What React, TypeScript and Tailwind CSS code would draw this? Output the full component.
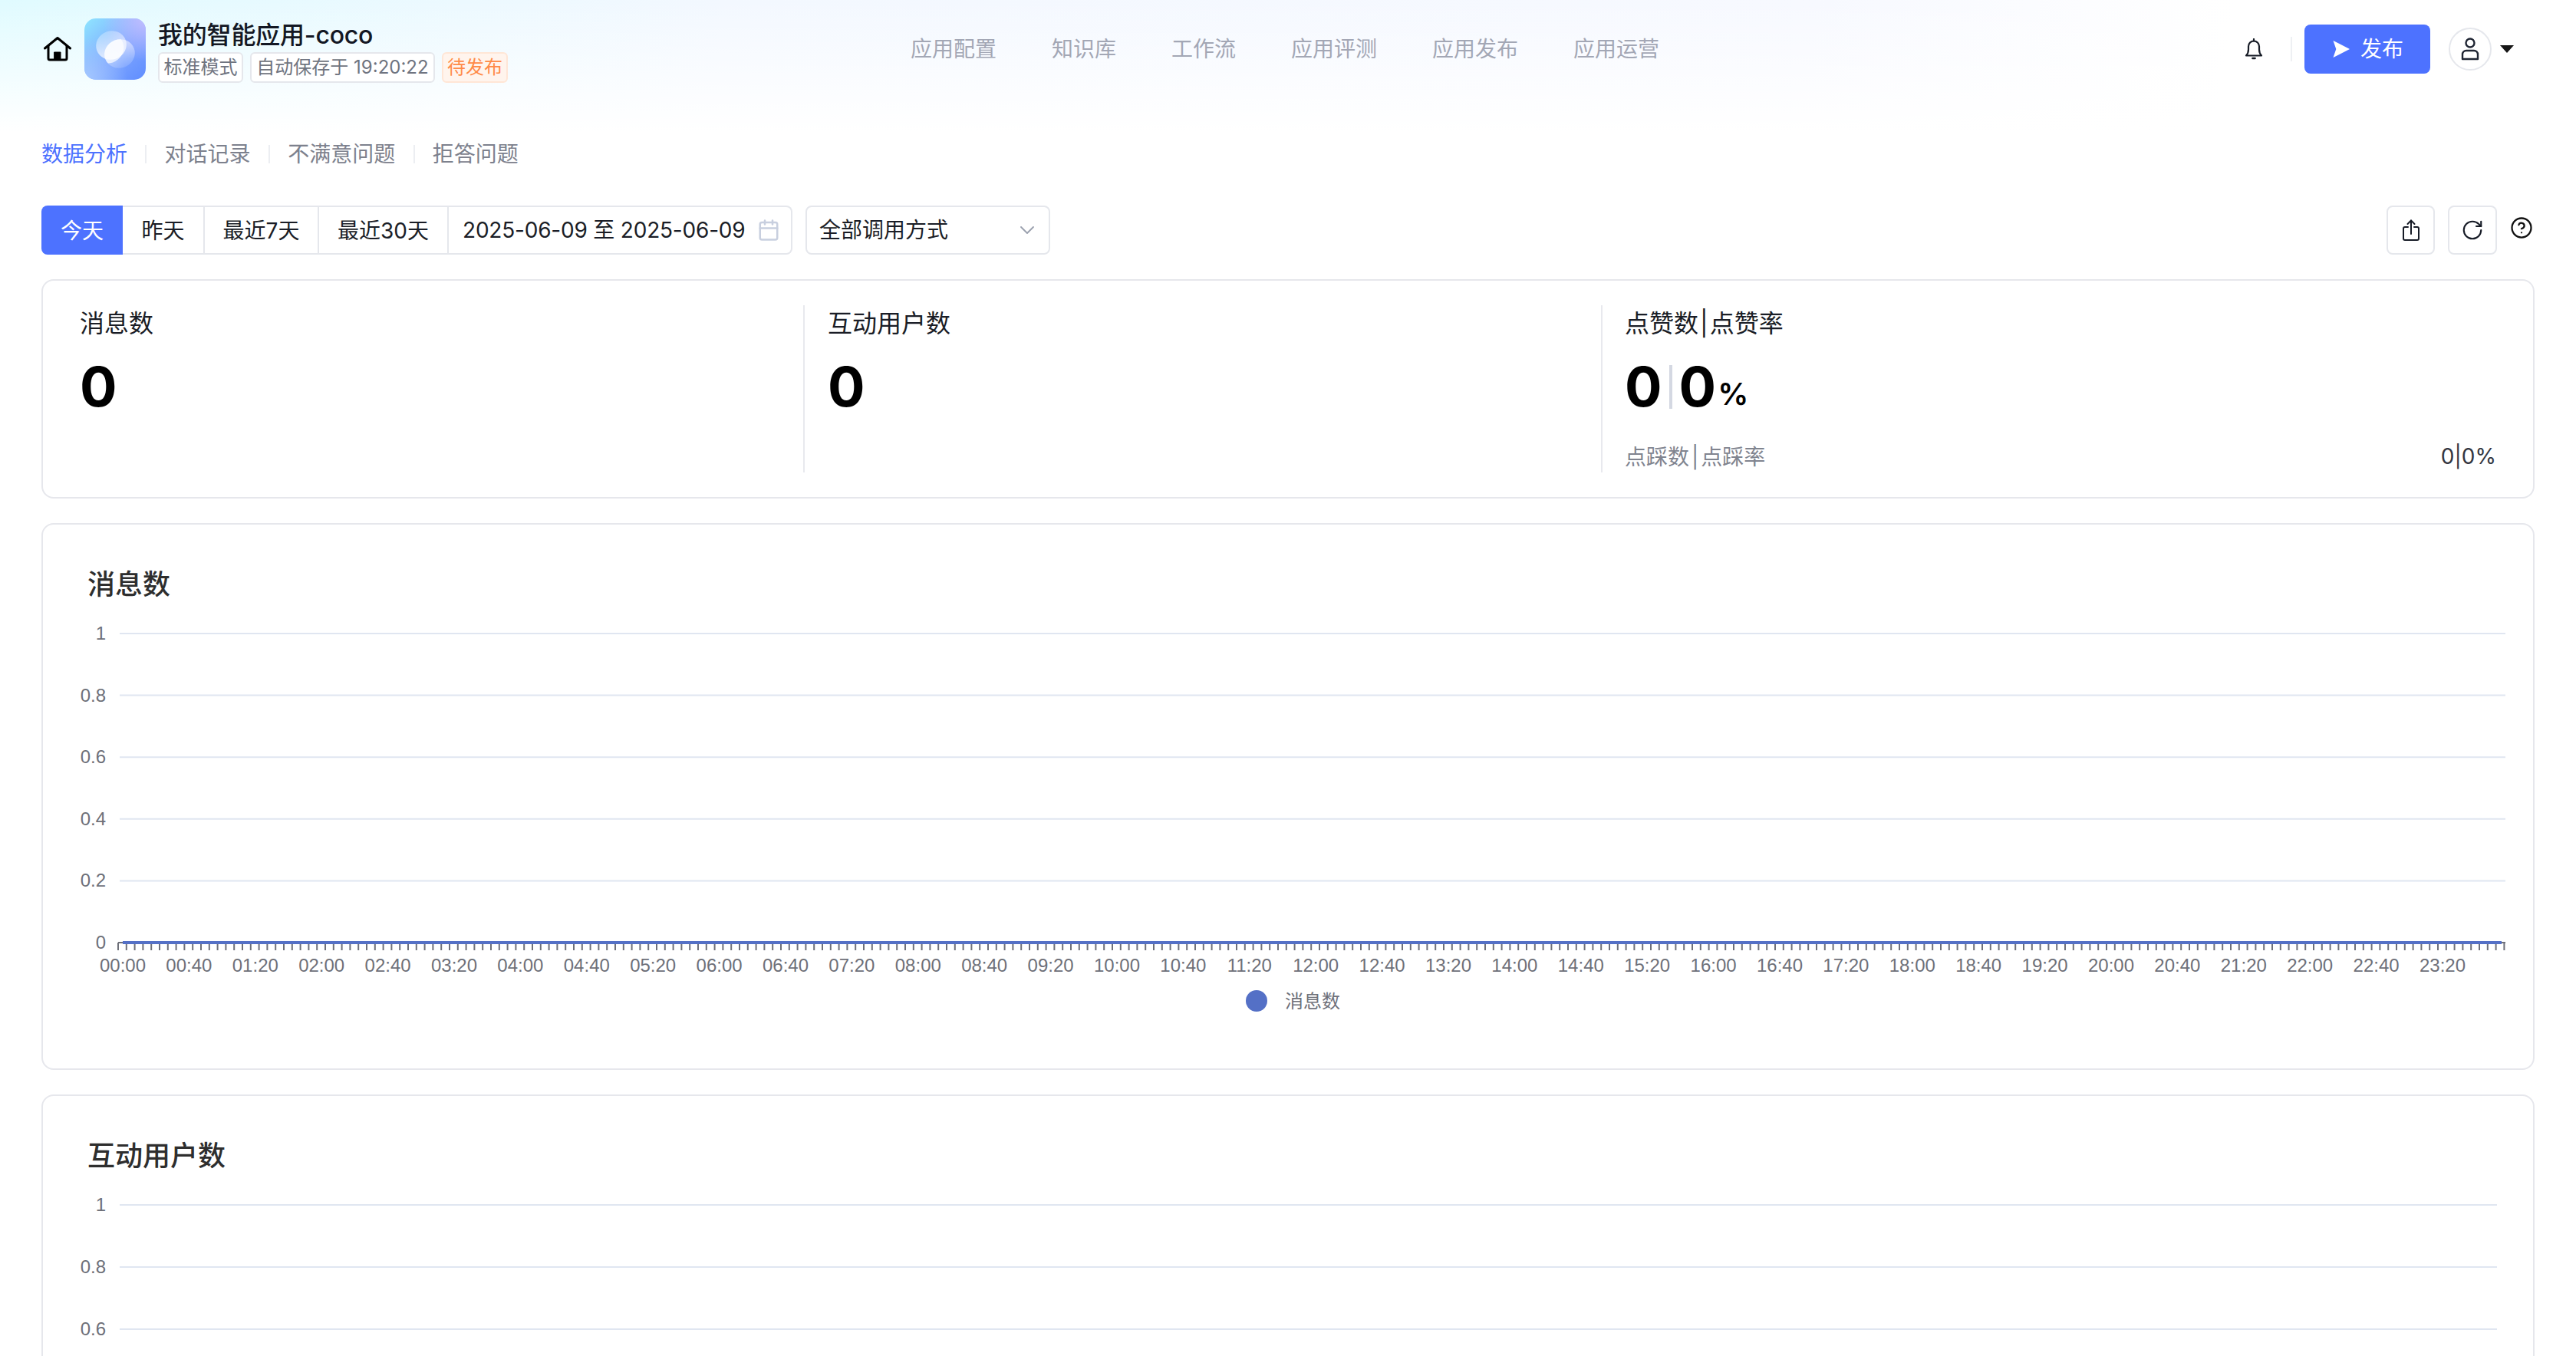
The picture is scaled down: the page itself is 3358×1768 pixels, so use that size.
import { Calendar, ChevronDown, CircleHelp, RotateCw } from "lucide-react";

const navItems = ["应用配置", "知识库", "工作流", "应用评测", "应用发布", "应用运营"];
const rangeItems = [
  { label: "昨天", width: "w-[107px]" },
  { label: "最近7天", width: "w-[149px]" },
  { label: "最近30天", width: "w-[169px]" },
];
const yTicks = ["1", "0.8", "0.6", "0.4", "0.2", "0"];

// every 40 minutes, 36 labels on the x axis
const xLabels = Array.from({ length: 36 }, (_, i) => {
  const minutes = i * 40;
  const h = String(Math.floor(minutes / 60)).padStart(2, "0");
  const m = String(minutes % 60).padStart(2, "0");
  return `${h}:${m}`;
});

function HomeIcon() {
  return (
    <svg width="36" height="32" viewBox="0 0 36 32" fill="none" stroke="#000" strokeWidth="3" strokeLinecap="round" strokeLinejoin="round">
      <path d="M1.5 15L18 1.5 34.5 15" />
      <path d="M6 12v16a2 2 0 0 0 2 2h20a2 2 0 0 0 2-2V12" />
      <rect x="14" y="20" width="8" height="9" fill="#000" strokeWidth="1" />
    </svg>
  );
}

function Logo() {
  return (
    <svg width="80" height="80" viewBox="0 0 80 80" className="shrink-0">
      <defs>
        <linearGradient id="logoBase" x1="0" y1="0" x2="1" y2="1">
          <stop offset="0" stopColor="#8fe6ff" />
          <stop offset="0.55" stopColor="#7ea6ff" />
          <stop offset="1" stopColor="#5f8dff" />
        </linearGradient>
        <radialGradient id="logoCorner" cx="1" cy="0" r="0.7">
          <stop offset="0" stopColor="#c3bdff" />
          <stop offset="1" stopColor="#c3bdff" stopOpacity="0" />
        </radialGradient>
        <radialGradient id="logoLow" cx="0" cy="1" r="0.7">
          <stop offset="0" stopColor="#a5c8ff" />
          <stop offset="1" stopColor="#a5c8ff" stopOpacity="0" />
        </radialGradient>
        <linearGradient id="logoTop" x1="0" y1="0" x2="0" y2="1">
          <stop offset="0" stopColor="#fff" stopOpacity="0.3" />
          <stop offset="1" stopColor="#fff" stopOpacity="0.8" />
        </linearGradient>
        <linearGradient id="logoBottom" x1="0" y1="0" x2="0" y2="1">
          <stop offset="0" stopColor="#fff" stopOpacity="0.6" />
          <stop offset="1" stopColor="#fff" stopOpacity="0.15" />
        </linearGradient>
        <clipPath id="logoLens">
          <ellipse cx="35" cy="35" rx="20" ry="18.5" transform="rotate(-20 35 35)" />
        </clipPath>
      </defs>
      <rect width="80" height="80" rx="15" fill="url(#logoBase)" />
      <rect width="80" height="80" rx="15" fill="url(#logoCorner)" />
      <rect width="80" height="80" rx="15" fill="url(#logoLow)" />
      <ellipse cx="35" cy="35" rx="20" ry="18.5" transform="rotate(-20 35 35)" fill="url(#logoTop)" />
      <ellipse cx="46" cy="46" rx="20" ry="18.5" transform="rotate(-20 46 46)" fill="url(#logoBottom)" />
      <ellipse cx="46" cy="46" rx="20" ry="18.5" transform="rotate(-20 46 46)" fill="#fff" fillOpacity="0.7" clipPath="url(#logoLens)" />
    </svg>
  );
}

function BellIcon() {
  return (
    <svg width="24" height="28" viewBox="0 0 24 28" fill="none" stroke="#161b26" strokeWidth="2.2" strokeLinejoin="round" strokeLinecap="round">
      <path d="M2 22.5c2-2 3-3.5 3-8V10.5a7 7 0 0 1 14 0V14.5c0 4.5 1 6 3 8z" />
      <path d="M12 1v2.5" />
      <path d="M10.5 26h3" strokeWidth="2.6" />
    </svg>
  );
}

function SendIcon() {
  return (
    <svg width="22" height="24" viewBox="0 0 23 24" fill="#fff">
      <path d="M0.5 0.5L23 12 0.5 23.5 4.5 12z" />
    </svg>
  );
}

function UserIcon() {
  return (
    <svg width="24" height="30" viewBox="0 0 24 30" fill="none" stroke="#1f2533" strokeWidth="2.4">
      <circle cx="12" cy="7" r="5.5" />
      <path d="M2 28v-6a5 5 0 0 1 5-5h10a5 5 0 0 1 5 5v6z" strokeLinejoin="round" />
    </svg>
  );
}

function ShareIcon() {
  return (
    <svg width="22" height="28" viewBox="0 0 22 28" fill="none" stroke="#161b26" strokeWidth="2" strokeLinecap="round" strokeLinejoin="round">
      <path d="M7 10H3a2 2 0 0 0-2 2v13a2 2 0 0 0 2 2h16a2 2 0 0 0 2-2V12a2 2 0 0 0-2-2h-4" />
      <path d="M11 19V1.5" />
      <path d="M6.5 6L11 1.5 15.5 6" />
    </svg>
  );
}

function ChartCard({
  title,
  step,
  gridEnd,
  ticks,
  full,
}: {
  title: string;
  step: number;
  gridEnd: number;
  ticks: string[];
  full?: boolean;
}) {
  const zeroY = 25 + step * 5;
  return (
    <div className="mt-[32px] h-[713px] rounded-[16px] border-2 border-[#e6e7ec] bg-white">
      <div className="mt-[57px] flex h-[42px] items-center pl-[58px] text-[36px] font-medium text-[#2e2e2e]">{title}</div>
      <svg width="3246" height="530" className="mt-[18px] block">
        {ticks.map((tick, i) => (
          <g key={tick}>
            <line x1="100" x2={gridEnd} y1={25 + step * i} y2={25 + step * i} stroke="#e0e6f1" strokeWidth="2" />
            <text x="82" y={33 + step * i} textAnchor="end" fontSize="24" fill="#6e7079" fontFamily="Liberation Sans, sans-serif">
              {tick}
            </text>
          </g>
        ))}
        {/* the rest of the second chart is below the fold */}
        {full && (
          <>
            <line x1="98" x2={gridEnd} y1={zeroY} y2={zeroY} stroke="#6e7079" strokeWidth="2" />
            {Array.from({ length: 289 }, (_, i) => (
              <line key={i} x1={98 + i * 10.8} x2={98 + i * 10.8} y1={zeroY} y2={zeroY + 10} stroke="#6e7079" strokeWidth="2" />
            ))}
            <line x1="104" x2="3205" y1={zeroY} y2={zeroY} stroke="#5470c6" strokeWidth="4" />
            {xLabels.map((label, i) => (
              <text key={label} x={104 + i * 86.4} y={zeroY + 38} textAnchor="middle" fontSize="24" fill="#6e7079" fontFamily="Liberation Sans, sans-serif">
                {label}
              </text>
            ))}
            <circle cx="1582" cy={zeroY + 76} r="14" fill="#5470c6" />
            <text x="1619" y={zeroY + 85} fontSize="24" fill="#6e7079" fontFamily="Noto Sans CJK SC, sans-serif">
              {title}
            </text>
          </>
        )}
      </svg>
    </div>
  );
}

export default function App() {
  return (
    <div className="h-[1768px] overflow-hidden bg-white font-['Inter','Noto_Sans_CJK_SC',sans-serif] text-[#1a1d26]">
      {/* gradient sits behind the header only */}
      <div className="bg-[linear-gradient(to_bottom,rgba(255,255,255,0)_0%,#ffffff_100%),linear-gradient(100deg,#e0fbff_0%,#f3f8ff_28%,#f7f9ff_70%,#ffffff_86%)]">
        <header className="flex h-[128px] items-center pl-[57px] pr-[81px]">
          <div className="flex w-[1130px] shrink-0 items-center">
            <HomeIcon />
            <div className="ml-[17px]">
              <Logo />
            </div>
            <div className="ml-[16px] mt-[3px] flex flex-col">
              <div className="flex h-[45px] items-center text-[32px] font-medium leading-none tracking-[-0.2px] text-[#141824]">我的智能应用-coco</div>
              <div className="flex gap-[9px] text-[24px] leading-none">
                <span className="flex h-[40px] w-[111px] items-center justify-center rounded-[6px] border-2 border-[#e5e7ec] bg-white text-[#6f7480]">标准模式</span>
                <span className="flex h-[40px] w-[241px] items-center justify-center rounded-[6px] border-2 border-[#e5e7ec] bg-white text-[#6f7480]">自动保存于 19:20:22</span>
                <span className="flex h-[40px] w-[86px] items-center justify-center rounded-[6px] border-2 border-[#ffe6d6] bg-[#fff4ed] text-[#ff8a47]">待发布</span>
              </div>
            </div>
          </div>
          <nav className="flex gap-[72px] text-[28px] text-[#a3a7b5]">
            {navItems.map((item) => (
              <span key={item}>{item}</span>
            ))}
          </nav>
          <div className="ml-auto flex items-center">
            <BellIcon />
            <div className="ml-[36px] h-[32px] w-[2px] bg-[#eef0f3]" />
            <button className="ml-[16px] flex h-[64px] w-[164px] items-center justify-center gap-[14px] rounded-[8px] bg-[#4d72ff] pl-[2px] text-[28px] text-white">
              <SendIcon />
              发布
            </button>
            <div className="ml-[24px] flex h-[56px] w-[56px] items-center justify-center rounded-full border-2 border-[#e5e7ec] bg-white">
              <UserIcon />
            </div>
            <svg width="18" height="10" viewBox="0 0 18 10" className="ml-[11px]" fill="#161616">
              <path d="M0 0h18L9 10z" />
            </svg>
          </div>
        </header>
        <div className="h-[44px]" />
      </div>

      <main className="px-[54px]">
        <div className="flex h-[56px] items-center pt-[2px] text-[28px] text-[#7d818d]">
          <span className="text-[#4d72ff]">数据分析</span>
          <span className="mx-[23.3px] h-[24px] w-[2px] bg-[#eceef2]" />
          <span>对话记录</span>
          <span className="mx-[23.3px] h-[24px] w-[2px] bg-[#eceef2]" />
          <span>不满意问题</span>
          <span className="mx-[23.3px] h-[24px] w-[2px] bg-[#eceef2]" />
          <span>拒答问题</span>
        </div>

        <div className="mt-[40px] flex h-[64px] items-stretch text-[28px]">
          <div className="flex">
            <button className="flex w-[106px] items-center justify-center rounded-l-[8px] bg-[#4d72ff] pt-[2px] text-white">今天</button>
            {rangeItems.map((item) => (
              <button key={item.label} className={`flex items-center justify-center border-y-2 border-r-2 border-[#e5e7ec] pt-[2px] ${item.width}`}>
                {item.label}
              </button>
            ))}
            <div className="flex w-[448px] items-center justify-between rounded-r-[8px] border-y-2 border-r-2 border-[#e5e7ec] pl-[18px] pr-[14px]">
              <span className="tracking-[-0.2px]">2025-06-09 至 2025-06-09</span>
              <Calendar size={30} strokeWidth={2} className="text-[#c8cfdf]" />
            </div>
          </div>
          <div className="ml-[17px] flex w-[319px] items-center justify-between rounded-[8px] border-2 border-[#e5e7ec] pl-[17px] pr-[12px]">
            <span className="-ml-[1px]">全部调用方式</span>
            <ChevronDown size={32} strokeWidth={1.4} className="text-[#9aa0ae]" />
          </div>
          <div className="ml-auto flex items-stretch">
            <button className="flex w-[63px] items-center justify-center rounded-[8px] border-2 border-[#e5e7ec]">
              <ShareIcon />
            </button>
            <button className="ml-[17px] flex w-[64px] items-center justify-center rounded-[8px] border-2 border-[#e5e7ec]">
              <RotateCw size={30} strokeWidth={1.7} className="text-[#161b26]" />
            </button>
            <div className="ml-[17px] mr-[2px] mt-[14px]">
              <CircleHelp size={30} strokeWidth={1.8} className="text-[#111]" />
            </div>
          </div>
        </div>

        <section className="mt-[32px] flex h-[286px] rounded-[16px] border-2 border-[#e6e7ec] bg-white py-[32px]">
          <div className="w-[991px] pl-[48px]">
            <div className="flex h-[46px] items-center pt-[1px] text-[32px] leading-none">消息数</div>
            <div className="mt-[24px] flex h-[72px] items-center text-[72px] font-bold leading-none text-black">0</div>
          </div>
          <div className="w-[1040px] border-l-2 border-[#e8e9ee] pl-[30px]">
            <div className="flex h-[46px] items-center pt-[1px] text-[32px] leading-none">互动用户数</div>
            <div className="mt-[24px] flex h-[72px] items-center text-[72px] font-bold leading-none text-black">0</div>
          </div>
          <div className="flex-1 border-l-2 border-[#e8e9ee] pl-[29px] pr-[48px]">
            <div className="flex h-[46px] items-center pt-[1px] text-[32px] leading-none">
              点赞数<span className="mx-[2px]">|</span>点赞率
            </div>
            <div className="mt-[24px] flex h-[72px] items-center text-[72px] font-bold leading-none text-black">
              <span>0</span>
              <span className="mx-[9px] h-[57px] w-[4px] bg-[#d4d8e2]" />
              <span>0</span>
              <span className="ml-[2px] mt-[20px] text-[40px] font-semibold">%</span>
            </div>
            <div className="mt-[36px] flex h-[40px] items-center justify-between">
              <span className="text-[28px] text-[#80848f]">
                点踩数<span className="mx-[3px]">|</span>点踩率
              </span>
              <span className="-mt-[2px] text-[28px] text-[#33363f]">0|0%</span>
            </div>
          </div>
        </section>

        <ChartCard title="消息数" step={80.6} gridEnd={3210} ticks={yTicks} full />
        <ChartCard title="互动用户数" step={81} gridEnd={3199} ticks={yTicks.slice(0, 3)} />
      </main>
    </div>
  );
}
